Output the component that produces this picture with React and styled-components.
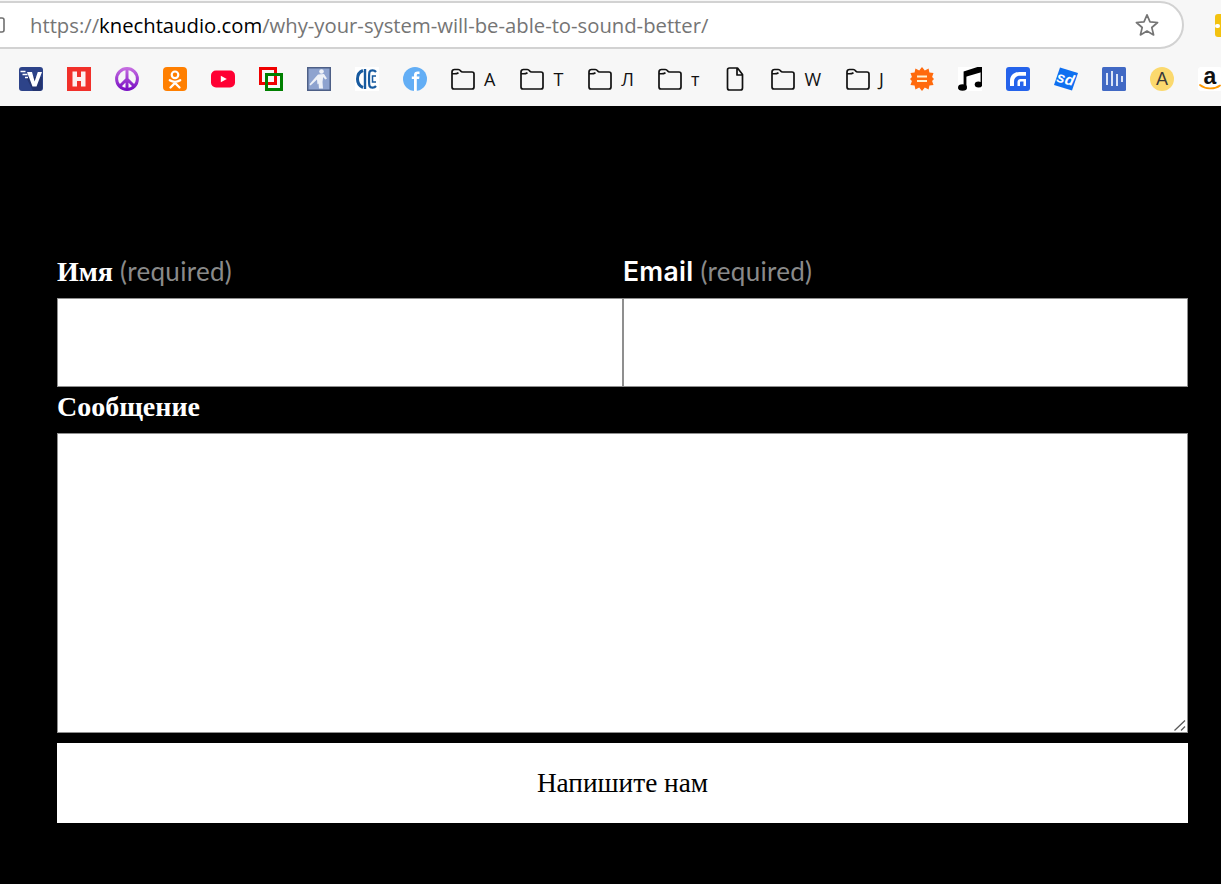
import React from 'react'
import styled, { createGlobalStyle } from 'styled-components'

const GlobalStyle = createGlobalStyle`
    html, body {
        margin: 0;
        padding: 0;
        background: #000;
    }
    body {
        width: 1221px;
        height: 884px;
        overflow: hidden;
    }
`

const AddressRow = styled.div`
    height: 49px;
    background: #f7f7f7;
    display: flex;
    align-items: flex-start;
    padding-top: 1px;
    box-sizing: border-box;
    overflow: hidden;
`

const AddressPill = styled.div`
    width: 1208px;
    height: 48px;
    margin-left: -24px;
    box-sizing: border-box;
    border: 2px solid #d2d2d2;
    border-radius: 24px;
    background: #fff;
    display: flex;
    align-items: center;
    padding-left: 13px;
    padding-right: 23px;
    flex: none;
`

const UrlText = styled.div`
    flex: 1;
    margin-left: 25px;
    font-family: "Open Sans", sans-serif;
    font-size: 20.25px;
    color: #757575;
    white-space: nowrap;
    span {
        color: #000;
    }
`

const ProfileChip = styled.div`
    width: 20px;
    height: 23px;
    margin: 13px 0 0 31px;
    background: #f3c20f;
    border-radius: 3px;
    flex: none;
    display: flex;
    align-items: center;
    &::before {
        content: "";
        width: 5px;
        height: 4px;
        border-radius: 2px;
        background: #fff;
    }
`

const BookmarkBar = styled.div`
    height: 57px;
    background: #f7f7f7;
    box-sizing: border-box;
    display: flex;
    align-items: flex-start;
    padding: 18px 0 0 19px;
    gap: 24px;
    overflow: hidden;
`

const Bookmark = styled.div`
    display: flex;
    align-items: center;
    gap: 9px;
    height: 24px;
    flex: none;
    margin-right: ${p => p.$trail || 0}px;
    font-family: "Open Sans", sans-serif;
    font-size: 18px;
    color: #111;
    svg {
        display: block;
        flex: none;
    }
`

const Page = styled.main`
    background: #000;
    height: 778px;
    box-sizing: border-box;
    padding: 152px 33px 0 57px;
`

const Form = styled.form`
    display: flex;
    flex-direction: column;
`

const FieldRow = styled.div`
    display: grid;
    grid-template-columns: 566px 565px;
`

const Label = styled.label`
    display: block;
    box-sizing: border-box;
    height: ${p => p.$height}px;
    line-height: 27px;
    padding-top: ${p => p.$top || 0}px;
    font-family: "Liberation Serif", serif;
    font-weight: 700;
    font-size: 28px;
    color: #fff;
    white-space: nowrap;
`

const SansName = styled.span`
    font-family: "Inter", sans-serif;
    font-size: 26.5px;
    font-weight: 600;
    letter-spacing: 0.3px;
`

const Required = styled.span`
    font-family: "Lato", sans-serif;
    font-weight: 400;
    font-size: 26px;
    letter-spacing: 0.3px;
    color: #8a8a8a;
`

const TextInput = styled.input`
    display: block;
    width: 100%;
    height: 89px;
    box-sizing: border-box;
    margin: 0;
    border: 1px solid #8f8f8f;
    background: #fff;
    outline: none;
`

const MessageWrap = styled.div`
    position: relative;
    height: 300px;
`

const MessageInput = styled.textarea`
    display: block;
    width: 100%;
    height: 100%;
    box-sizing: border-box;
    margin: 0;
    border: 1px solid #8f8f8f;
    background: #fff;
    outline: none;
    resize: none;
`

const Grip = styled.svg`
    position: absolute;
    right: 2px;
    bottom: 2px;
    width: 12px;
    height: 12px;
`

const SubmitButton = styled.button`
    display: block;
    width: 100%;
    height: 80px;
    margin-top: 10px;
    border: 0;
    background: #fff;
    color: #000;
    font-family: "Liberation Serif", serif;
    font-size: 27.3px;
`

const LockIcon = () => (
    <svg width="14" height="16" viewBox="0 0 14 16">
        <rect x="1" y="1" width="12" height="14" rx="2" fill="none" stroke="#6f6f6f" strokeWidth="1.6" />
    </svg>
)

const StarIcon = () => (
    <svg width="24" height="24" viewBox="0 0 24 24">
        <path d="M12 1.8l3 7 7.6.7-5.8 5 1.8 7.4L12 18l-6.6 3.9 1.8-7.4-5.8-5 7.6-.7z" fill="none" stroke="#757575" strokeWidth="1.7" strokeLinejoin="round" />
    </svg>
)

const VIcon = () => (
    <svg width="24" height="24" viewBox="0 0 24 24">
        <rect width="24" height="24" rx="3" fill="#2d4389" />
        <path d="M14 24L7 10h16v11a3 3 0 0 1-3 3z" fill="#24346f" />
        <path d="M8 5h5l2.600 9.500L18.800 5H23l-5.500 14.500h-4z" fill="#fff" />
        <path d="M1.500 4.500h5M3.500 7.500h5M6 10.500h3" stroke="#fff" strokeWidth="1.300" />
    </svg>
)

const HIcon = () => (
    <svg width="24" height="24" viewBox="0 0 24 24">
        <rect width="24" height="24" fill="#f1302a" />
        <path d="M5.500 4.500h4.500V10h4V4.500h4.500v15H14V14h-4v5.500H5.500z" fill="#fdf0ef" />
    </svg>
)

const PeaceIcon = () => (
    <svg width="24" height="24" viewBox="0 0 24 24">
        <defs>
            <linearGradient id="peace" x1="0" y1="0" x2="0" y2="1">
                <stop offset="0" stopColor="#c46be0" />
                <stop offset="1" stopColor="#7a10c4" />
            </linearGradient>
        </defs>
        <g fill="none" stroke="url(#peace)" strokeWidth="3">
            <circle cx="12" cy="12" r="10.400" />
            <path d="M12 1.500v21M12 12l-7.500 7.500M12 12l7.500 7.500" />
        </g>
    </svg>
)

const OkIcon = () => (
    <svg width="24" height="24" viewBox="0 0 24 24">
        <rect width="24" height="24" rx="4" fill="#ff7f00" />
        <circle cx="12" cy="7.800" r="3.300" fill="none" stroke="#fff" strokeWidth="2.200" />
        <path d="M6.800 13.200c3.200 2 7.200 2 10.400 0M12 15v1.500M7.500 20.500l4.500-4.500 4.500 4.500" fill="none" stroke="#fff" strokeWidth="2.300" strokeLinecap="round" />
    </svg>
)

const YoutubeIcon = () => (
    <svg width="24" height="24" viewBox="0 0 24 24">
        <rect y="3.500" width="24" height="17" rx="5" fill="#ff0033" />
        <path d="M9.800 8.800l6 3.200-6 3.200z" fill="#fff" />
    </svg>
)

const SquaresIcon = () => (
    <svg width="24" height="24" viewBox="0 0 24 24">
        <rect x="1.500" y="1.500" width="15" height="15" fill="none" stroke="#f00000" strokeWidth="3" />
        <rect x="7.500" y="7.500" width="15" height="15" fill="none" stroke="#008000" strokeWidth="3" />
    </svg>
)

const RunnerIcon = () => (
    <svg width="24" height="24" viewBox="0 0 24 24">
        <rect width="24" height="24" fill="#4d5f86" />
        <rect x="1.500" y="1.500" width="21" height="21" fill="#8ea3cf" />
        <circle cx="14.500" cy="4.500" r="2.300" fill="#eef1f7" />
        <path d="M11 7.500l6-.5 3 4.500-1.800 1-2-2.500-.7 5 .5 6.500h-4l-.5-5-1 1-.5-5-6.500 6-1-1.200 6-7z" fill="#eef1f7" />
    </svg>
)

const CrestIcon = () => (
    <svg width="24" height="24" viewBox="0 0 24 24">
        <rect width="24" height="24" fill="#fff" />
        <g fill="none" stroke="#175a9f">
            <path d="M8 3.500C4 5 2.500 8.500 2.500 12s1.500 7 5.500 8.500" strokeWidth="3" />
            <path d="M10 2v20" strokeWidth="2.400" />
            <path d="M21 5c-1.500-2-5.500-2.500-6.500 0-.6 2-.6 12 0 14 1 2.500 5 2 6.500 0" strokeWidth="2.200" />
            <path d="M21 9h-3.500v6H21" strokeWidth="1.500" />
        </g>
    </svg>
)

const RoundFbIcon = () => (
    <svg width="24" height="24" viewBox="0 0 24 24">
        <circle cx="12" cy="12" r="12" fill="#63aef5" />
        <path d="M11 24V12H8.800V9.500H11V7.800C11 5 12.800 4 16.500 4.500v2.700c-2-.3-2.700 0-2.700 1.200v1.100h2.700l-.4 2.500h-2.300v12z" fill="#fff" />
    </svg>
)

const FolderIcon = () => (
    <svg width="24" height="24" viewBox="0 0 24 24">
        <path d="M1 5C1 3.400 2 2.500 3.500 2.500h3.700c1.200 0 1.800.5 2.500 1.500.4.600 1 1 2 1H21c1.200 0 2 .8 2 2v13c0 1.200-.8 2-2 2H3c-1.200 0-2-.8-2-2z M1 6.500c2 .4 5 .1 6.500-.8" fill="none" stroke="#111" strokeWidth="1.700" strokeLinejoin="round" />
    </svg>
)

const FileIcon = () => (
    <svg width="24" height="24" viewBox="0 0 24 24">
        <path d="M4.500 3c0-1.200.8-2 2-2h8l5 6.500V21c0 1.200-.8 2-2 2h-11c-1.200 0-2-.8-2-2zM14 1.500V8h5.500" fill="none" stroke="#111" strokeWidth="1.700" strokeLinejoin="round" />
    </svg>
)

const BadgeIcon = () => (
    <svg width="24" height="24" viewBox="0 0 24 24">
        <path d="M12 0l2.800 3.400L18.600 1.500l.8 4.100 4.100.3-1.400 4L24 12l-1.900 2.100 1.400 4-4.100.3-.8 4.100-3.800-1.900L12 24l-2.800-3.400-3.800 1.900-.8-4.100-4.100-.3 1.400-4L0 12l1.900-2.100-1.400-4 4.100-.3.800-4.100 3.800 1.900z" fill="#ff6a0d" />
        <path d="M7 9.500h10M7 14h10" stroke="#fff1d0" strokeWidth="2.200" />
    </svg>
)

const MusicIcon = () => (
    <svg width="24" height="24" viewBox="0 0 24 24">
        <rect width="24" height="24" fill="#fff" />
        <path d="M7 20V5.500L24 0v17" fill="none" stroke="#000" strokeWidth="2.800" />
        <path d="M7 5.500L24 0v5L7 10z" fill="#000" />
        <ellipse cx="4.500" cy="20.500" rx="4.500" ry="3.300" fill="#000" />
        <ellipse cx="20.500" cy="17.500" rx="3.800" ry="3" fill="#000" />
    </svg>
)

const ArcIcon = () => (
    <svg width="24" height="24" viewBox="0 0 24 24">
        <rect width="24" height="24" rx="3" fill="#2563eb" />
        <path d="M4 19v-5C4 8.500 8 5 13.500 5H20v3.800h-6c-3.500 0-6 2.200-6 5.700V19z" fill="#fff" />
        <path d="M11.500 19v-4c0-2 1.500-3 3-3H20v7h-2.500v-4.500h-2.500c-.7 0-1 .5-1 1V19z" fill="#fff" />
    </svg>
)

const SdIcon = () => (
    <svg width="24" height="24" viewBox="0 0 24 24">
        <path d="M6 .5L24 6l-6 17.500L0 18z" fill="#0f6ff0" />
        <text x="11.500" y="17" textAnchor="middle" fontFamily="Liberation Sans, sans-serif" fontWeight="700" fontStyle="italic" fontSize="15" fill="#fff" transform="rotate(14 12 12)">sd</text>
    </svg>
)

const WaveIcon = () => (
    <svg width="24" height="24" viewBox="0 0 24 24">
        <rect width="24" height="24" rx="1.500" fill="#4169c4" />
        <path d="M5 6v12M10 4v15M15 7v12M20 9v6" stroke="#dbe4f7" strokeWidth="2" />
    </svg>
)

const LetterCoinIcon = () => (
    <svg width="24" height="24" viewBox="0 0 24 24">
        <circle cx="12" cy="12" r="12" fill="#fbd96e" />
        <text x="12" y="18" textAnchor="middle" fontFamily="Liberation Sans, sans-serif" fontSize="18" fill="#3a3a3a">A</text>
    </svg>
)

const AmazonIcon = () => (
    <svg width="24" height="24" viewBox="0 0 24 24">
        <rect width="24" height="24" rx="3" fill="#fff" />
        <text x="12" y="17" textAnchor="middle" fontFamily="Liberation Sans, sans-serif" fontWeight="700" fontSize="23" fill="#111">a</text>
        <path d="M2 18c5 4 14 5 20 .5" fill="none" stroke="#ff9900" strokeWidth="1.800" strokeLinecap="round" />
    </svg>
)

// trail makes up for the label widths being a little narrower than in the shot
const bookmarks = [
    { icon: VIcon }, { icon: HIcon }, { icon: PeaceIcon }, { icon: OkIcon }, { icon: YoutubeIcon },
    { icon: SquaresIcon }, { icon: RunnerIcon }, { icon: CrestIcon }, { icon: RoundFbIcon },
    { icon: FolderIcon, label: 'A', trail: 1 }, { icon: FolderIcon, label: 'T', trail: 1 }, { icon: FolderIcon, label: 'Л' },
    { icon: FolderIcon, label: 'т' }, { icon: FileIcon }, { icon: FolderIcon, label: 'W', trail: 1 },
    { icon: FolderIcon, label: 'J', trail: 2 }, { icon: BadgeIcon }, { icon: MusicIcon }, { icon: ArcIcon },
    { icon: SdIcon }, { icon: WaveIcon }, { icon: LetterCoinIcon }, { icon: AmazonIcon },
]

function App() {
    return (
        <>
            <GlobalStyle />
            <AddressRow>
                <AddressPill>
                    <LockIcon />
                    <UrlText>https://<span>knechtaudio.com</span>/why-your-system-will-be-able-to-sound-better/</UrlText>
                    <StarIcon />
                </AddressPill>
                <ProfileChip />
            </AddressRow>
            <BookmarkBar>
                {bookmarks.map((b, i) => (
                    <Bookmark key={i} $trail={b.trail}>
                        <b.icon />
                        {b.label}
                    </Bookmark>
                ))}
            </BookmarkBar>
            <Page>
                <Form onSubmit={e => e.preventDefault()}>
                    <FieldRow>
                        <div>
                            <Label $height={40} htmlFor="name">Имя <Required>(required)</Required></Label>
                            <TextInput id="name" type="text" />
                        </div>
                        <div>
                            <Label $height={40} htmlFor="email"><SansName>Email</SansName> <Required>(required)</Required></Label>
                            <TextInput id="email" type="email" />
                        </div>
                    </FieldRow>
                    <Label $height={46} $top={6} htmlFor="message">Сообщение</Label>
                    <MessageWrap>
                        <MessageInput id="message" />
                        <Grip viewBox="0 0 12 12">
                            <path d="M0.500 11.500L11 1.500M7 11.500L11 7.500" stroke="#5a5a5a" strokeWidth="1.300" fill="none" />
                        </Grip>
                    </MessageWrap>
                    <SubmitButton type="submit">Напишите нам</SubmitButton>
                </Form>
            </Page>
        </>
    )
}

export default App
